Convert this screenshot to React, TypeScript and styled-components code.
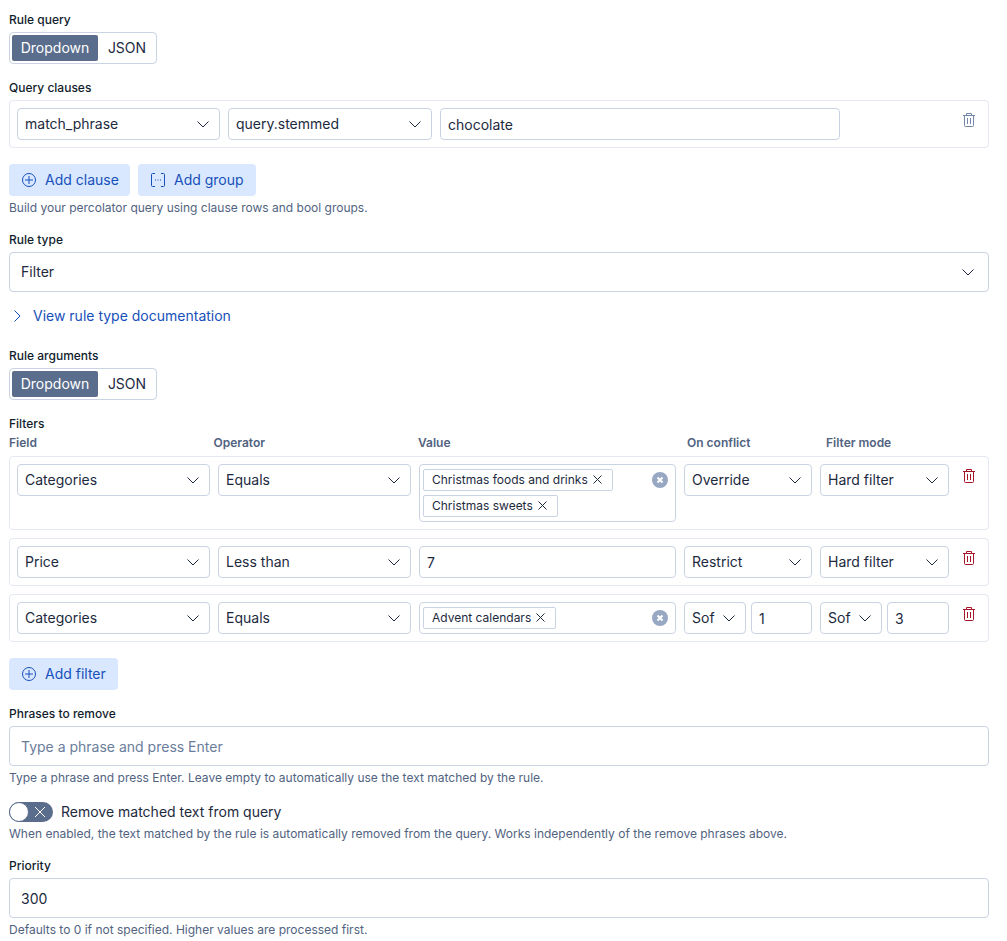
import React from 'react';
import styled, { createGlobalStyle } from 'styled-components';

const GlobalStyle = createGlobalStyle`
  html, body { margin: 0; padding: 0; background: #fff; }
  body { font-family: Inter, "Liberation Sans", sans-serif; color: #1d2a3e; }
  * { box-sizing: border-box; }
`;

const Page = styled.div`
  width: 1007px;
  padding: 13px 18px 0 9px;
  display: flex;
  flex-direction: column;
`;

const Label = styled.div<{ $top?: number }>`
  font-size: 12px;
  line-height: 14px;
  font-weight: 500;
  color: #111c2c;
  margin-top: ${(p) => p.$top ?? 0}px;
  margin-bottom: 5px;
`;

const Help = styled.div`
  font-size: 12px;
  line-height: 16px;
  color: #516381;
  margin-top: 4px;
`;

const ToggleGroup = styled.div`
  display: flex;
  width: 148px;
  height: 32px;
  padding: 2px;
  border: 1px solid #cad3e2;
  border-radius: 4px;
`;

const ToggleButton = styled.div<{ $active?: boolean }>`
  flex: none;
  display: flex;
  align-items: center;
  justify-content: center;
  height: 26px;
  padding: 0 0 1px ${(p) => (p.$active ? '0' : '2px')};
  width: ${(p) => (p.$active ? '86px' : '56px')};
  border-radius: 2px;
  font-size: 14px;
  background: ${(p) => (p.$active ? '#5a6d8c' : 'transparent')};
  color: ${(p) => (p.$active ? '#fff' : '#1d2a3e')};
`;

const Panel = styled.div`
  display: flex;
  align-items: flex-start;
  gap: 8px;
  padding: 7px;
  border: 1px solid #e3e8f2;
  border-radius: 4px;
  margin-bottom: 8px;
`;

const ClausePanel = styled(Panel)`
  margin-bottom: 0;
`;

const Field = styled.div<{ $w?: number; $h?: number }>`
  display: flex;
  align-items: center;
  justify-content: space-between;
  flex: none;
  width: ${(p) => (p.$w ? `${p.$w}px` : '100%')};
  height: ${(p) => p.$h ?? 32}px;
  padding: 0 8px 1px 7px;
  background: #fff;
  border: 1px solid #cad3e2;
  border-radius: 4px;
  font-size: 14px;
  color: #1d2a3e;
`;

const TallField = styled(Field)`
  padding: 0 12px 1px 11px;
`;

const TextInput = styled.input<{ $w?: number; $h?: number; $pad?: number }>`
  flex: none;
  display: block;
  width: ${(p) => (p.$w ? `${p.$w}px` : '100%')};
  height: ${(p) => p.$h ?? 32}px;
  padding: 0 ${(p) => p.$pad ?? 7}px;
  border: 1px solid #cad3e2;
  border-radius: 4px;
  font: 400 14px Inter, "Liberation Sans", sans-serif;
  color: #1d2a3e;
  outline: none;
  &::placeholder { color: #6a7d9b; opacity: 1; }
`;

const ButtonRow = styled.div<{ $top?: number }>`
  display: flex;
  gap: 8px;
  margin-top: ${(p) => p.$top ?? 16}px;
`;

const SoftButton = styled.div<{ $w: number }>`
  display: flex;
  align-items: center;
  gap: 8px;
  width: ${(p) => p.$w}px;
  height: 32px;
  padding: 0 0 1px 12px;
  background: #d9e8ff;
  border-radius: 4px;
  font-size: 14px;
  color: #1750ba;
`;

const DocLink = styled.div`
  display: flex;
  align-items: center;
  gap: 8px;
  height: 16px;
  margin: 16px 0 25px;
  padding-bottom: 1px;
  font-size: 14px;
  color: #1750ba;
`;

const ColumnHeads = styled.div`
  display: flex;
  margin-bottom: 6px;
`;

const ColumnHead = styled.div<{ $w: number }>`
  width: ${(p) => p.$w}px;
  font-size: 12px;
  line-height: 14px;
  font-weight: 600;
  color: #516381;
`;

const ComboBox = styled.div<{ $h: number }>`
  position: relative;
  flex: none;
  width: 257px;
  min-height: ${(p) => p.$h}px;
  padding: 4px 36px 4px 3px;
  border: 1px solid #cad3e2;
  border-radius: 4px;
  display: flex;
  flex-wrap: wrap;
  gap: 4px;
  align-content: flex-start;
`;

const Chip = styled.div`
  display: flex;
  align-items: center;
  gap: 5px;
  height: 22px;
  padding: 0 10px 1px 8px;
  border: 1px solid #cad3e2;
  border-radius: 2px;
  font-size: 12px;
  color: #1d2a3e;
  white-space: nowrap;
`;

const ClearIcon = styled.span`
  position: absolute;
  top: 7px;
  right: 7px;
  width: 16px;
  height: 16px;
  display: flex;
`;

const SplitCell = styled.div<{ $w: number }>`
  flex: none;
  width: ${(p) => p.$w}px;
  display: flex;
  justify-content: space-between;
`;

const TrashSlot = styled.div`
  flex: none;
  width: 16px;
  height: 16px;
  margin: 4px 0 0 4px;
  display: flex;
`;

const ClauseTrash = styled(TrashSlot)`
  margin-left: 113px;
`;

const SwitchRow = styled.div`
  display: flex;
  align-items: center;
  gap: 8px;
  height: 20px;
  margin-top: 16px;
  font-size: 14px;
  color: #1d2a3e;
`;

const SwitchLabel = styled.span`
  padding-bottom: 1px;
`;

const SwitchTrack = styled.div`
  position: relative;
  width: 44px;
  height: 20px;
  border-radius: 10px;
  background: #5a6d8c;
  display: flex;
  align-items: center;
  justify-content: flex-end;
  padding-right: 6px;
`;

const SwitchKnob = styled.div`
  position: absolute;
  left: 0;
  top: 0;
  width: 20px;
  height: 20px;
  border-radius: 50%;
  background: #fff;
  border: 1px solid #5a6d8c;
`;

const Chevron = () => (
  <svg width="16" height="16" viewBox="0 0 16 16" fill="none" stroke="#1d2a3e" strokeWidth="1">
    <path d="M2.5 5.5 8 11l5.5-5.5" />
  </svg>
);

const ChevronRight = () => (
  <svg width="16" height="16" viewBox="0 0 16 16" fill="none" stroke="#1750ba" strokeWidth="1">
    <path d="M5.5 2.5 11 8l-5.5 5.5" />
  </svg>
);

const PlusCircle = () => (
  <svg width="16" height="16" viewBox="0 0 16 16" fill="none" stroke="#1750ba" strokeWidth="1">
    <circle cx="8" cy="8" r="6.5" />
    <path d="M8 4v8M4 8h8" />
  </svg>
);

const GroupIcon = () => (
  <svg width="16" height="16" viewBox="0 0 16 16" fill="none" stroke="#1750ba" strokeWidth="1">
    <path d="M5 1.5H2.5a1 1 0 0 0-1 1v11a1 1 0 0 0 1 1H5M11 1.5h2.5a1 1 0 0 1 1 1v11a1 1 0 0 1-1 1H11" />
    <path d="M5 8h1M7.5 8h1M10 8h1" />
  </svg>
);

const Trash = ({ color }: { color: string }) => (
  <svg width="16" height="16" viewBox="0 0 16 16" fill="none" stroke={color} strokeWidth="1">
    <path d="M2 3.5h12M5.5 3.5v-2h5v2M3.5 3.5v10a1 1 0 0 0 1 1h7a1 1 0 0 0 1-1v-10M6.5 6v6M9.5 6v6" />
  </svg>
);

const CloseSmall = () => (
  <svg width="9" height="9" viewBox="0 0 9 9" fill="none" stroke="#1d2a3e" strokeWidth="1">
    <path d="M.5.5l8 8M8.5.5l-8 8" />
  </svg>
);

const ClearCircle = () => (
  <svg width="16" height="16" viewBox="0 0 16 16">
    <circle cx="8" cy="8" r="8" fill="#98a8c3" />
    <path d="M5.5 5.5l5 5M10.5 5.5l-5 5" stroke="#fff" strokeWidth="2" />
  </svg>
);

const Select = ({ value, w }: { value: string; w?: number }) => (
  <Field $w={w}>
    {value}
    <Chevron />
  </Field>
);

const ModeToggle = () => (
  <ToggleGroup>
    <ToggleButton $active>Dropdown</ToggleButton>
    <ToggleButton>JSON</ToggleButton>
  </ToggleGroup>
);

const App = () => {
  return (
    <Page>
      <GlobalStyle />
      <Label>Rule query</Label>
      <ModeToggle />

      <Label $top={17}>Query clauses</Label>
      <ClausePanel>
        <Select value="match_phrase" w={203} />
        <Select value="query.stemmed" w={204} />
        <TextInput $w={400} defaultValue="chocolate" />
        <ClauseTrash>
          <Trash color="#7186a8" />
        </ClauseTrash>
      </ClausePanel>
      <ButtonRow>
        <SoftButton $w={121}>
          <PlusCircle />
          Add clause
        </SoftButton>
        <SoftButton $w={118}>
          <GroupIcon />
          Add group
        </SoftButton>
      </ButtonRow>
      <Help>Build your percolator query using clause rows and bool groups.</Help>

      <Label $top={17}>Rule type</Label>
      <TallField $h={40}>
        Filter
        <Chevron />
      </TallField>
      <DocLink>
        <ChevronRight />
        View rule type documentation
      </DocLink>

      <Label>Rule arguments</Label>
      <ModeToggle />

      <Label $top={17}>Filters</Label>
      <ColumnHeads>
        <ColumnHead $w={204.5}>Field</ColumnHead>
        <ColumnHead $w={204.5}>Operator</ColumnHead>
        <ColumnHead $w={269}>Value</ColumnHead>
        <ColumnHead $w={139}>On conflict</ColumnHead>
        <ColumnHead $w={120}>Filter mode</ColumnHead>
      </ColumnHeads>

      <Panel>
        <Select value="Categories" w={193} />
        <Select value="Equals" w={193} />
        <ComboBox $h={58}>
          <Chip>
            Christmas foods and drinks
            <CloseSmall />
          </Chip>
          <Chip>
            Christmas sweets
            <CloseSmall />
          </Chip>
          <ClearIcon>
            <ClearCircle />
          </ClearIcon>
        </ComboBox>
        <Select value="Override" w={128} />
        <Select value="Hard filter" w={129} />
        <TrashSlot>
          <Trash color="#a71627" />
        </TrashSlot>
      </Panel>

      <Panel>
        <Select value="Price" w={193} />
        <Select value="Less than" w={193} />
        <TextInput $w={257} defaultValue="7" />
        <Select value="Restrict" w={128} />
        <Select value="Hard filter" w={129} />
        <TrashSlot>
          <Trash color="#a71627" />
        </TrashSlot>
      </Panel>

      <Panel>
        <Select value="Categories" w={193} />
        <Select value="Equals" w={193} />
        <ComboBox $h={32}>
          <Chip>
            Advent calendars
            <CloseSmall />
          </Chip>
          <ClearIcon>
            <ClearCircle />
          </ClearIcon>
        </ComboBox>
        <SplitCell $w={128}>
          <Select value="Sof" w={62} />
          <TextInput $w={61} defaultValue="1" />
        </SplitCell>
        <SplitCell $w={129}>
          <Select value="Sof" w={62} />
          <TextInput $w={62} defaultValue="3" />
        </SplitCell>
        <TrashSlot>
          <Trash color="#a71627" />
        </TrashSlot>
      </Panel>

      <ButtonRow $top={8}>
        <SoftButton $w={109}>
          <PlusCircle />
          Add filter
        </SoftButton>
      </ButtonRow>

      <Label $top={17}>Phrases to remove</Label>
      <TextInput $h={40} $pad={11} placeholder="Type a phrase and press Enter" />
      <Help>Type a phrase and press Enter. Leave empty to automatically use the text matched by the rule.</Help>

      <SwitchRow>
        <SwitchTrack>
          <SwitchKnob />
          <svg width="14" height="14" viewBox="0 0 14 14" fill="none" stroke="#fff" strokeWidth="1">
            <path d="M2 2l10 10M12 2L2 12" />
          </svg>
        </SwitchTrack>
        <SwitchLabel>Remove matched text from query</SwitchLabel>
      </SwitchRow>
      <Help>When enabled, the text matched by the rule is automatically removed from the query. Works independently of the remove phrases above.</Help>

      <Label $top={17}>Priority</Label>
      <TextInput $h={40} $pad={11} defaultValue="300" />
      <Help>Defaults to 0 if not specified. Higher values are processed first.</Help>
    </Page>
  );
};

export default App;
